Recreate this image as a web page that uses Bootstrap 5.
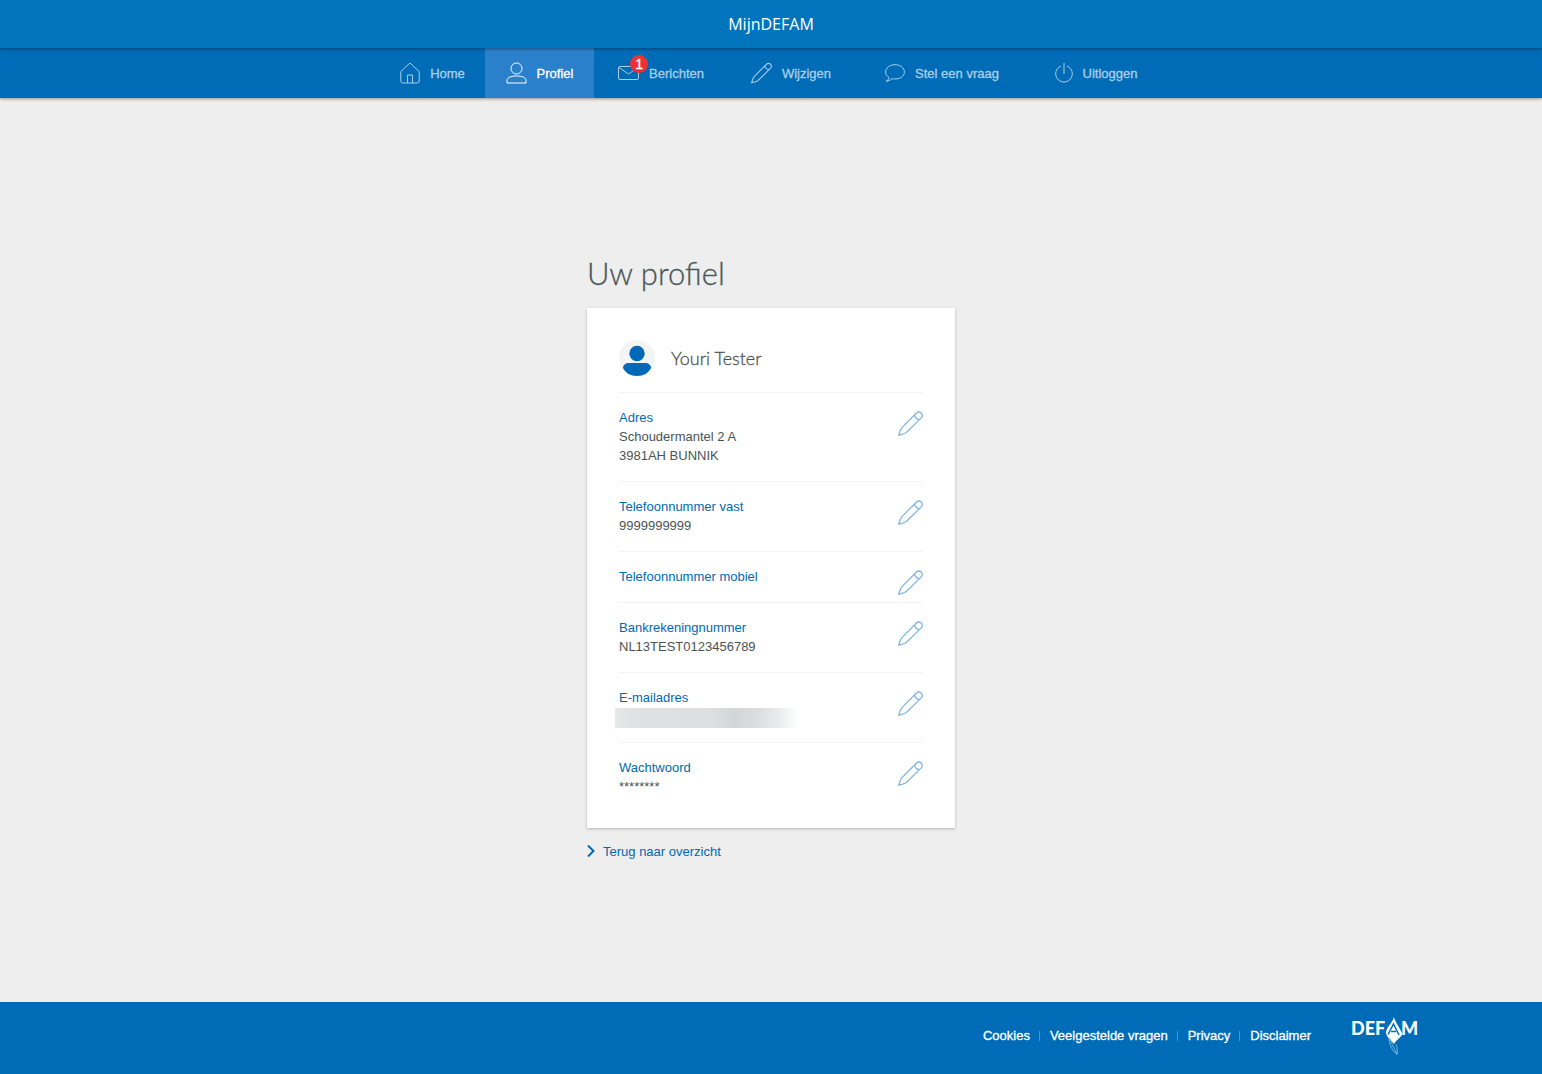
<!DOCTYPE html>
<html lang="nl">
<head>
<meta charset="utf-8">
<meta name="viewport" content="width=device-width, initial-scale=1">
<title>MijnDEFAM - Uw profiel</title>
<link href="https://cdn.jsdelivr.net/npm/bootstrap@5.3.0/dist/css/bootstrap.min.css" rel="stylesheet">
<style>
  body { font-family: "Liberation Sans", Arial, sans-serif; font-size: 13px; line-height: 19px; color: #4a5354; background: #eee; }
  a { color: #0069b4; text-decoration: none; }
  svg { fill: none; stroke: currentColor; flex: none; }
  .brand-bar { height: 48px; background: #0075be; color: #fff; font-family: "Open Sans", sans-serif; font-size: 16px; box-shadow: 0 1px 3px rgba(0,0,0,.4); z-index: 2; }
  .main-nav { background: #006cb7; box-shadow: 0 1px 3px rgba(0,0,0,.4); z-index: 1; }
  .nav-grid { display: grid; grid-template-columns: 105fr 109fr 134fr 126fr 176fr 132fr; width: 100%; max-width: 782px; }
  .nav-grid a { height: 50px; gap: 10px; color: #a9cfea; -webkit-text-stroke: .3px; }
  .nav-grid a.active { background: #2b80cb; color: #fff; }
  .msg-count { left: 12px; top: -11px; width: 18px; height: 18px; line-height: 18px; font-size: 14px; background: #ee3135; color: #fff; }
  .profile-col { width: 100%; max-width: 368px; padding-top: 14px; }
  .page-title { font-family: Lato, sans-serif; font-weight: 300; font-size: 31px; line-height: 38px; color: #4a5859; margin-bottom: 16px; -webkit-text-stroke: .3px; }
  .profile-card { background: #fff; padding: 32px; border-radius: 1px; box-shadow: 0 1px 3px rgba(0,0,0,.25); }
  .person-name { font-family: Lato, sans-serif; font-weight: 300; font-size: 18px; line-height: 36px; color: #4a5354; -webkit-text-stroke: .3px; }
  .entry { border-top: 1px solid #f3f3f3; padding: 15px 0 16px; }
  .entry:last-child { padding-bottom: 0; }
  .entry h2 { font-size: 13px; line-height: 19px; font-weight: 400; color: #0069b4; margin: 0; }
  .edit-link { height: 19px; padding-top: 3px; color: #7fb5e2; }
  .masked { width: 181px; height: 20px; margin: 1px 0 -2px -4px; background: linear-gradient(90deg, #e8eaea, #dfe2e2 10%, #dcdfe0 55%, #d1d6d8 65%, #dadddf 78%, #e9ecec 90%, #fbfcfc); }
  .back-link { margin-top: 14px; }
  .site-footer { background: #006cb7; height: 72px; padding-bottom: 5px; }
  .site-footer a { color: #fff; -webkit-text-stroke: .3px; }
  .sep { width: 1px; height: 10px; background: #5c8fb9; margin: 0 10px 0 9px; }
  .defam-logo { margin-left: 40px; }
  .defam-logo text { font-family: Lato, sans-serif; font-weight: 900; font-size: 18px; fill: #fff; stroke: none; }
</style>
<script src="https://cdn.jsdelivr.net/npm/bootstrap@5.3.0/dist/js/bootstrap.bundle.min.js"></script>
</head>
<body class="d-flex flex-column min-vh-100">

<svg width="0" height="0" class="position-absolute" aria-hidden="true">
  <symbol id="pencil" viewBox="0 0 24 24">
    <path stroke-width="1.200" d="M.8 23.200C1.600 20.500 2 18 3.600 16.200L17.500 2.200a3.600 3.600 0 0 1 4.800-.3 3.600 3.600 0 0 1-.2 4.900L8 20.700C6 22.200 3.300 22.400.8 23.200zM16 3.700c.3 2.300 2 4.200 4.500 4.600"/>
  </symbol>
</svg>

<header class="brand-bar position-relative d-flex align-items-center justify-content-center">MijnDEFAM</header>

<nav class="main-nav position-relative d-flex justify-content-center" aria-label="Hoofdmenu">
  <div class="nav-grid">
    <a href="#" class="d-flex align-items-center justify-content-center">
      <svg width="20" height="22" viewBox="0 0 20 22"><path d="M.8 9.500 10 1l9.200 8.500V19a2 2 0 0 1-2 2H2.800a2 2 0 0 1-2-2zM7.500 21v-8h5v8"/></svg>Home</a>
    <a href="#" class="active d-flex align-items-center justify-content-center" aria-current="page">
      <svg width="21" height="22" viewBox="0 0 21 22"><circle cx="10.500" cy="6.500" r="5.500"/><path d="M1 21v-2.500c0-3 4-4.500 9.500-4.500s9.500 1.500 9.500 4.500V21z"/></svg>Profiel</a>
    <a href="#" class="d-flex align-items-center justify-content-center">
      <span class="position-relative d-flex"><svg width="21" height="14" viewBox="0 0 21 14"><rect x=".5" y=".5" width="20" height="13" rx="1.500"/><path d="m1 1.500 9.500 6.500L20 1.500"/></svg><span class="msg-count position-absolute rounded-circle text-center">1</span></span>Berichten</a>
    <a href="#" class="d-flex align-items-center justify-content-center">
      <svg width="21" height="22"><use href="#pencil"/></svg>Wijzigen</a>
    <a href="#" class="d-flex align-items-center justify-content-center">
      <svg width="20" height="18" viewBox="0 0 20 18"><path d="M4 13.500C2 12.300.6 10.300.6 8 .6 4 4.700.7 10 .7S19.400 4 19.400 8 15.300 15 10 15c-1 0-2-.1-2.900-.4C5.500 16.200 3.300 17.200 1 17.300 2.700 16.500 3.800 15.200 4 13.500z"/></svg>Stel een vraag</a>
    <a href="#" class="d-flex align-items-center justify-content-center">
      <svg width="18" height="20" viewBox="0 0 18 20"><path d="M6 3A8.300 8.300 0 1 0 12 3M9 0v11"/></svg>Uitloggen</a>
  </div>
</nav>

<main class="flex-grow-1 d-flex align-items-center justify-content-center">
  <div class="profile-col">
    <h1 class="page-title">Uw profiel</h1>
    <section class="profile-card">
      <div class="d-flex gap-3 pb-3">
        <svg width="36" height="36" viewBox="0 0 36 36" aria-hidden="true"><g stroke="none"><circle cx="18" cy="18" r="18" fill="#f4f4f4"/><circle cx="18" cy="13.500" r="7.700" fill="#0069b9"/><path d="M10 23h16c3.500 0 6 2 6 5-2.500 5-7.500 8-14 8S6.500 33 4 28c0-3 2.500-5 6-5z" fill="#0069b9"/></g></svg>
        <span class="person-name">Youri Tester</span>
      </div>
      <div class="entry d-flex justify-content-between">
        <div><h2>Adres</h2>Schoudermantel 2 A<br>3981AH BUNNIK</div>
        <a href="#" class="edit-link d-flex" aria-label="Adres wijzigen"><svg width="25" height="25"><use href="#pencil"/></svg></a>
      </div>
      <div class="entry d-flex justify-content-between">
        <div><h2>Telefoonnummer vast</h2>9999999999</div>
        <a href="#" class="edit-link d-flex" aria-label="Telefoonnummer vast wijzigen"><svg width="25" height="25"><use href="#pencil"/></svg></a>
      </div>
      <div class="entry d-flex justify-content-between">
        <h2>Telefoonnummer mobiel</h2>
        <a href="#" class="edit-link d-flex" aria-label="Telefoonnummer mobiel wijzigen"><svg width="25" height="25"><use href="#pencil"/></svg></a>
      </div>
      <div class="entry d-flex justify-content-between">
        <div><h2>Bankrekeningnummer</h2>NL13TEST0123456789</div>
        <a href="#" class="edit-link d-flex" aria-label="Bankrekeningnummer wijzigen"><svg width="25" height="25"><use href="#pencil"/></svg></a>
      </div>
      <div class="entry d-flex justify-content-between">
        <div><h2>E-mailadres</h2><div class="masked"></div></div>
        <a href="#" class="edit-link d-flex" aria-label="E-mailadres wijzigen"><svg width="25" height="25"><use href="#pencil"/></svg></a>
      </div>
      <div class="entry d-flex justify-content-between">
        <div><h2>Wachtwoord</h2>********</div>
        <a href="#" class="edit-link d-flex" aria-label="Wachtwoord wijzigen"><svg width="25" height="25"><use href="#pencil"/></svg></a>
      </div>
    </section>
    <a href="#" class="back-link d-flex align-items-center gap-2">
      <svg width="8" height="12" viewBox="0 0 8 12" stroke-width="2"><path d="m1 .5 5.500 5.500L1 11.500"/></svg>Terug naar overzicht</a>
  </div>
</main>

<footer class="site-footer d-flex align-items-center">
  <div class="container d-flex align-items-center justify-content-end">
    <nav class="d-flex align-items-center" aria-label="Voettekst">
      <a href="#">Cookies</a><span class="sep"></span>
      <a href="#">Veelgestelde vragen</a><span class="sep"></span>
      <a href="#">Privacy</a><span class="sep"></span>
      <a href="#">Disclaimer</a>
    </nav>
    <svg class="defam-logo" width="68" height="38" viewBox="0 0 68 38" role="img" aria-label="DEFAM">
      <text x="0" y="18">DEF</text><text x="50" y="18">M</text>
      <path fill="#fff" stroke="none" d="M43 0c1 5 6 11 8.500 17-2 4-6.500 6-8.500 10-2-3-7-6-8-11 0-6 6-9 8-16z"/>
      <path stroke="#006cb7" stroke-width="1.500" d="m37 17.500 5.500-10.500 5.500 11M40 14.500h5"/>
      <path stroke="#8fc0e4" stroke-width=".8" d="M38 20c0 7 3 14 8 17.500 1-4 0-7-1-10M39 21c1 5 4 10 7 16"/>
    </svg>
  </div>
</footer>
</body>
</html>
